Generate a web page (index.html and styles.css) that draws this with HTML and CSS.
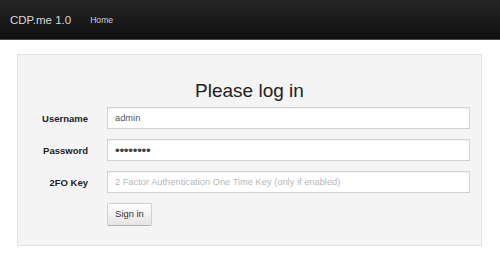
FILE: index.html
```html
<!DOCTYPE html>
<html lang="en">
<head>
    <meta charset="UTF-8">
    <meta name="viewport" content="width=device-width, initial-scale=1.0">
    <link rel="stylesheet" href="styles.css">
    <title>CDP.me 1.0</title>
</head>
<body>

    <div class="navbar">
        <a class="brand" href="#">CDP.me 1.0</a>
        <a class="nav-link" href="#">Home</a>
    </div>

    <div class="well">
        <h2>Please log in</h2>
        <form class="login-form">
            <label for="username">Username</label>
            <input type="text" id="username" value="admin">

            <label for="password">Password</label>
            <input type="password" id="password" value="password">

            <label for="otp">2FO Key</label>
            <input type="text" id="otp" placeholder="2 Factor Authentication One Time Key (only if enabled)">

            <span></span>
            <div><button type="submit" class="btn">Sign in</button></div>
        </form>
    </div>

</body>
</html>
```

FILE: styles.css
```css
body {
    margin: 0;
    font-family: 'Liberation Sans', Arial, sans-serif;
    background-color: #fff;
    color: #333;
}

.navbar {
    height: 39px;
    display: flex;
    align-items: center;
    background: linear-gradient(to bottom, #262626, #0f0f0f);
    border-bottom: 1px solid #4a4a4a;
}

.brand {
    color: #d8d8d8;
    font-size: 11.5px;
    text-decoration: none;
    margin-left: 10px;
    margin-top: 1px;
}

.nav-link {
    color: #d0d0d0;
    font-size: 8.6px;
    text-decoration: none;
    margin-left: 19px;
}

.well {
    margin: 14px 0 0 17px;
    width: 463px;
    height: 190px;
    background-color: #f4f4f4;
    border: 1px solid #e2e2e2;
}

h2 {
    font-size: 19px;
    font-weight: normal;
    text-align: center;
    color: #222;
    margin: 25px 0 5px;
    line-height: 22px;
}

.login-form {
    display: grid;
    grid-template-columns: 70px 1fr;
    column-gap: 19px;
    row-gap: 10px;
    padding-right: 11px;
    align-items: center;
}

label {
    text-align: right;
    font-size: 9.5px;
    font-weight: bold;
    color: #222;
}

input {
    height: 22px;
    box-sizing: border-box;
    border: 1px solid #d2d2d2;
    background-color: #fff;
    padding: 0 7px;
    font-family: 'Liberation Sans', Arial, sans-serif;
    font-size: 9.3px;
    color: #555;
    box-shadow: inset 0 1px 1px rgba(0, 0, 0, 0.05);
}

input::placeholder {
    color: #b8b8b8;
}

input[type="password"] {
    font-size: 13.5px;
    color: #444;
    letter-spacing: -0.3px;
}

.btn {
    height: 23px;
    width: 45px;
    padding: 0;
    font-family: 'Liberation Sans', Arial, sans-serif;
    font-size: 9.3px;
    color: #333;
    background: linear-gradient(to bottom, #ffffff, #e4e4e4);
    border: 1px solid #cfcfcf;
    border-bottom-color: #b5b5b5;
    border-radius: 2px;
    margin-top: -1px;
}
```
